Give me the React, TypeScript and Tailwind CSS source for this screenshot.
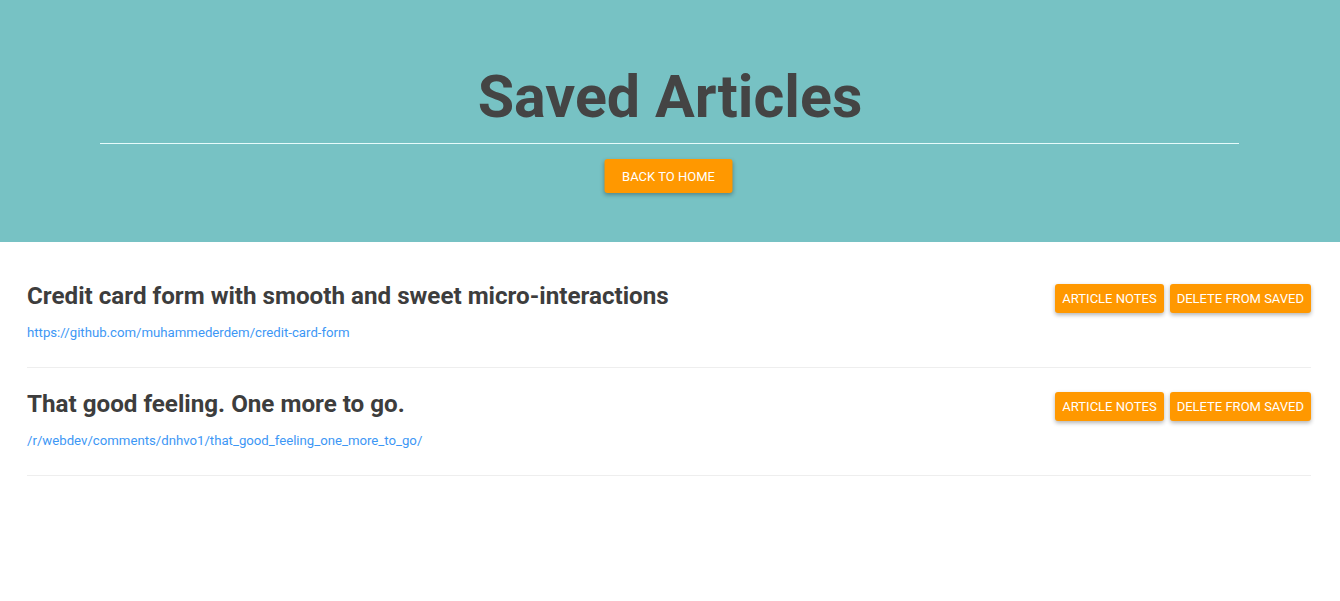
import React from "react";

const articles = [
  {
    title: "Credit card form with smooth and sweet micro-interactions",
    url: "https://github.com/muhammederdem/credit-card-form",
  },
  {
    title: "That good feeling. One more to go.",
    url: "/r/webdev/comments/dnhvo1/that_good_feeling_one_more_to_go/",
  },
];

function OrangeButton({ children, className }: { children: React.ReactNode; className?: string }) {
  return (
    <button
      type="button"
      className={
        "bg-[#ff9800] text-white uppercase rounded-[3px] shadow-[0_2px_4px_rgba(0,0,0,0.3)] leading-none " +
        (className || "")
      }
    >
      {children}
    </button>
  );
}

export default function App() {
  return (
    <div className="min-h-[601px] bg-white font-['Roboto',sans-serif]">
      <header className="bg-[#77c2c4] h-[242px] flex flex-col items-center pt-[58px]">
        <h1 className="text-[59.2px] font-bold text-[#444444] leading-[78px]">Saved Articles</h1>
        <hr className="w-[1139px] border-0 border-t border-[#e6fbfb] mt-[7px] -translate-x-[1px]" />
        <OrangeButton className="mt-[15px] h-[34px] px-[17.5px] text-[13px] -translate-x-[1.5px]">
          Back to Home
        </OrangeButton>
      </header>

      <main className="pl-[27px] pr-[29px] pt-[18px]">
        {articles.map((a) => (
          <div key={a.title} className="border-b border-[#eeeeee] pt-[22px] pb-[24px]">
            <div className="flex justify-between items-start">
              <h2 className="text-[24.2px] font-bold text-[#3d3d3d] leading-[29px]">{a.title}</h2>
              <div className="flex gap-[6px] mt-[2px]">
                <OrangeButton className="h-[29px] px-[7px] text-[13px]">Article Notes</OrangeButton>
                <OrangeButton className="h-[29px] px-[7px] text-[13px]">Delete from Saved</OrangeButton>
              </div>
            </div>
            <a href="#" className="block mt-[10px] text-[13.2px] leading-[20px] text-[#3d97f5]">
              {a.url}
            </a>
          </div>
        ))}
      </main>
    </div>
  );
}
